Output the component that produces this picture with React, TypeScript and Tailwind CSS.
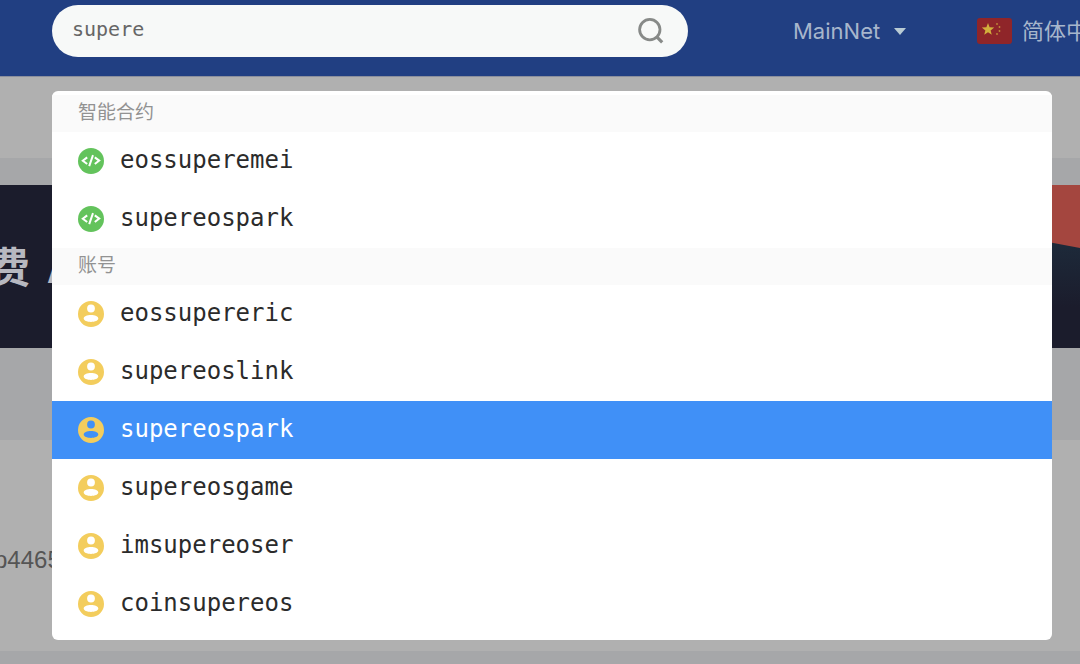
import { useState } from "react";

type Kind = "contract" | "account";

const groups: { title: string; kind: Kind; names: string[] }[] = [
  {
    title: "智能合约",
    kind: "contract",
    names: ["eossuperemei", "supereospark"],
  },
  {
    title: "账号",
    kind: "account",
    names: [
      "eossupereric",
      "supereoslink",
      "supereospark",
      "supereosgame",
      "imsupereoser",
      "coinsupereos",
    ],
  },
];

const ContractIcon = () => (
  <svg viewBox="0 0 26 26" className="size-[26px] shrink-0" aria-hidden="true">
    <circle cx="13" cy="13" r="13" fill="#63c35c" />
    <path
      d="M9.2 9.4 4.8 12.8l4.4 3.2M16.8 9.4l4.4 3.2-4.4 3.4M15 7.2l-3.8 11"
      fill="none"
      stroke="#fff"
      strokeWidth="2"
    />
  </svg>
);

// head and shoulders are holes, so the row colour shows through
const AccountIcon = () => (
  <svg viewBox="0 0 26 26" className="size-[26px] shrink-0" aria-hidden="true">
    <path
      fill="#f3cd5d"
      fillRule="evenodd"
      d="M13 0a13 13 0 1 0 0 26a13 13 0 1 0 0-26zM13 3.6a3.9 3.9 0 1 1 0 7.8a3.9 3.9 0 1 1 0-7.8zM13 14c4 0 7.3 1.5 7.3 3.5s-3.3 3.4-7.3 3.4s-7.3-1.4-7.3-3.4s3.3-3.5 7.3-3.5z"
    />
  </svg>
);

const SearchIcon = () => (
  <svg
    viewBox="0 0 28 28"
    className="size-7"
    fill="none"
    stroke="#878a88"
    strokeWidth="2.8"
    aria-hidden="true"
  >
    <circle cx="13.8" cy="12.6" r="10.2" />
    <path d="m21 20.2 5.2 5.2" strokeWidth="3.2" />
  </svg>
);

const Flag = () => (
  <svg viewBox="0 0 35 26" className="h-[26px] w-[35px] shrink-0" aria-hidden="true">
    <rect width="35" height="26" rx="3" fill="#8f2529" />
    <path
      fill="#d3b03c"
      d="m11 5 1.6 4.3 4.6.2-3.6 2.9 1.2 4.4-3.8-2.5-3.8 2.5 1.2-4.4-3.6-2.9 4.6-.2z"
    />
    <g fill="#c08a3a">
      <circle cx="20" cy="6" r=".9" />
      <circle cx="22.5" cy="9" r=".9" />
      <circle cx="22.5" cy="13" r=".9" />
      <circle cx="20" cy="16" r=".9" />
    </g>
  </svg>
);

const Header = () => {
  const [query, setQuery] = useState("supere");

  return (
    <header className="flex h-[77px] items-start border-b border-[#8b8f9d] bg-[#213f82] pl-[52px]">
      <form
        role="search"
        className="mt-[5px] flex h-[52px] w-[636px] shrink-0 items-center rounded-full bg-[#f7f9f8] pr-6 pl-5"
        onSubmit={(e) => e.preventDefault()}
      >
        <input
          type="text"
          aria-label="搜索"
          value={query}
          onChange={(e) => setQuery(e.target.value)}
          className="h-12 min-w-0 flex-1 bg-transparent pb-1 font-['DejaVu_Sans_Mono',monospace] text-[20px] text-[#666] outline-none"
        />
        <button type="submit" aria-label="提交">
          <SearchIcon />
        </button>
      </form>
      <div className="ml-[105px] flex h-[62px] shrink-0 items-center text-[22px] text-[#a7b6cc]">
        <div className="flex items-center">
          <select
            aria-label="网络"
            className="appearance-none bg-transparent font-[Inter,sans-serif] outline-none"
          >
            <option>MainNet</option>
          </select>
          <svg viewBox="0 0 12 7" className="ml-[13px] h-[7px] w-3" aria-hidden="true">
            <path d="M0 0h12L6 7z" fill="#b9cbd4" />
          </svg>
        </div>
        <div className="ml-[71px] flex items-center gap-[10px]">
          <Flag />
          <select
            aria-label="语言"
            className="appearance-none bg-transparent pb-1 font-['Noto_Sans_CJK_SC',sans-serif] outline-none"
          >
            <option>简体中文</option>
          </select>
        </div>
      </div>
    </header>
  );
};

const Results = () => {
  const [selected, setSelected] = useState("account/supereospark");

  return (
    <div
      role="listbox"
      aria-label="搜索结果"
      className="absolute top-[91px] right-7 left-[52px] overflow-hidden rounded-md bg-white pt-1 pb-[7px]"
    >
      {groups.map((group) => (
        <div key={group.kind} role="group" aria-label={group.title}>
          <div className="h-[37px] bg-[#fafafa] px-[26px] font-['Noto_Sans_CJK_SC',sans-serif] text-[19px] leading-8 text-[#929292]">
            {group.title}
          </div>
          {group.names.map((name) => {
            const id = `${group.kind}/${name}`;
            const active = id === selected;
            return (
              <button
                key={id}
                type="button"
                role="option"
                aria-selected={active}
                onClick={() => setSelected(id)}
                className={`flex h-[58px] w-full items-center gap-4 px-[26px] text-left font-['DejaVu_Sans_Mono',monospace] text-[24px] ${
                  active ? "bg-[#4090f7] text-white" : "text-[#2b2b2b]"
                }`}
              >
                {group.kind === "contract" ? <ContractIcon /> : <AccountIcon />}
                <span className="pb-0.5">{name}</span>
              </button>
            );
          })}
        </div>
      ))}
    </div>
  );
};

const App = () => {
  return (
    <div className="relative min-h-screen overflow-hidden bg-[#a6a7a9]">
      <Header />
      <main>
        <div className="h-[81px] bg-[#b0b0b0]"></div>
        <div className="mt-[27px] flex h-[163px] items-center justify-between bg-[#1b1c2c]">
          <p className="-ml-3 flex gap-[18px] pb-1 font-['Noto_Sans_CJK_SC',sans-serif] text-[42px] font-bold whitespace-nowrap text-[#b7b8c0]">
            <span>费</span>
            <span>A</span>
          </p>
          <svg viewBox="0 0 80 163" className="h-[163px] w-20" aria-hidden="true">
            <defs>
              <linearGradient id="night" x1="0" y1="0" x2="0" y2="1">
                <stop offset="0.35" stopColor="#1d2a3a" />
                <stop offset="0.75" stopColor="#1b1c2c" />
              </linearGradient>
            </defs>
            <path d="M0 0h80v163H0z" fill="url(#night)" />
            <path d="M0 0h80v63L0 48z" fill="#a4463f" />
          </svg>
        </div>
        <div className="mt-[92px] flex h-[211px] items-center bg-[#b0b0b0]">
          <p className="-ml-[6px] pt-7 font-['Liberation_Sans',Arial,sans-serif] text-[24px] text-[#555]">
            p4465
          </p>
        </div>
      </main>
      <Results />
    </div>
  );
};

export default App;
